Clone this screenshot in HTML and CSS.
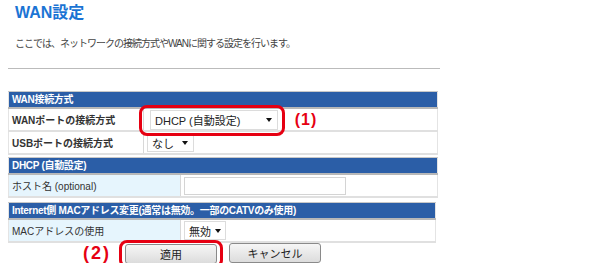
FILE: index.html
```html
<!DOCTYPE html>
<html lang="ja">
<head>
    <meta charset="UTF-8">
    <title>WAN設定</title>
    <link rel="stylesheet" href="styles.css">
</head>
<body>
    <div class="page">
        <h1 class="title">WAN設定</h1>
        <p class="lead">ここでは、ネットワークの接続方式やWANに関する設定を行います。</p>
        <hr class="rule">

        <table class="setting first">
            <tr><th colspan="2">WAN接続方式</th></tr>
            <tr>
                <td class="label bold">WANポートの接続方式</td>
                <td class="value">
                    <span class="mark">
                        <span class="select wide">DHCP (自動設定)<span class="arrow"></span></span>
                        <span class="ring"></span>
                    </span>
                    <span class="note">(1)</span>
                </td>
            </tr>
            <tr>
                <td class="label bold">USBポートの接続方式</td>
                <td class="value"><span class="select small">なし<span class="arrow"></span></span></td>
            </tr>
        </table>

        <table class="setting">
            <tr><th colspan="2">DHCP (自動設定)</th></tr>
            <tr>
                <td class="label blue wide-label">ホスト名 (optional)</td>
                <td class="value"><span class="textbox"></span></td>
            </tr>
        </table>

        <table class="setting gap narrow">
            <tr><th colspan="2">Internet側 MACアドレス変更(通常は無効。一部のCATVのみ使用)</th></tr>
            <tr>
                <td class="label blue wide-label">MACアドレスの使用</td>
                <td class="value"><span class="select tiny">無効<span class="arrow"></span></span></td>
            </tr>
        </table>

        <div class="buttons">
            <span class="note big">(2)</span>
            <span class="press">
                <button class="btn">適用</button>
            </span>
            <button class="btn cancel">キャンセル</button>
        </div>
    </div>
</body>
</html>
```

FILE: styles.css
```css
/* ページ全体 */
body {
    margin: 0;
    background-color: #fff;
    font-family: "Liberation Sans", "Noto Sans CJK JP", sans-serif;
    color: #333;
}
.page {
    width: 440px;
    padding: 0 0 0 8px;
}
.title {
    margin: 2px 0 0 7px;
    font-size: 16px;
    font-weight: bold;
    color: #1b74d4;
    line-height: 22px;
}
.lead {
    margin: 13px 0 0 7px;
    font-size: 10px;
    line-height: 14px;
    letter-spacing: -1px;
    color: #444;
}
.rule {
    margin: 17px 0 0 0;
    border: none;
    border-top: 1px solid #bbb;
    width: 432px;
}

/* 設定テーブル */
.setting {
    width: 430px;
    border-collapse: collapse;
    border: 1px solid #e4e4e4;
    font-size: 10px;
    margin-top: 2px;
}
.setting.first {
    margin-top: 22px;
}
.setting.gap {
    margin-top: 4px;
}
.setting.narrow {
    width: 428px;
}
.setting th {
    background-color: #2b5ea7;
    color: #fff;
    text-align: left;
    font-weight: bold;
    height: 15px;
    padding: 0 3px;
    border-top: 1px solid #c8c8c8;
    border-bottom: 2px solid #b8b8b8;
    line-height: 15px;
    letter-spacing: -0.3px;
}
.setting td {
    border-bottom: 2px solid #e0e0e0;
    height: 21px;
    padding: 0 3px;
    vertical-align: middle;
}
.label {
    width: 128px;
    border-right: 1px solid #d8d8d8;
    color: #333;
}
.label.bold {
    font-weight: bold;
}
.label.blue {
    background-color: #e6f5fd;
}
.label.wide-label {
    width: 165px;
}
.value {
    padding-left: 3px;
}

/* セレクト風 */
.select {
    display: inline-flex;
    align-items: center;
    justify-content: space-between;
    box-sizing: border-box;
    height: 19px;
    padding: 0 5px 0 4px;
    border: 1px solid #dcdcdc;
    background-color: #fff;
    font-size: 11px;
    color: #222;
    white-space: nowrap;
    vertical-align: middle;
}
.select.wide {
    width: 128px;
    height: 20px;
    font-size: 11px;
    margin-left: 3px;
}
.select.small {
    width: 47px;
}
.select.tiny {
    width: 42px;
    gap: 4px;
}
.arrow {
    width: 0;
    height: 0;
    border-left: 3px solid transparent;
    border-right: 3px solid transparent;
    border-top: 4px solid #111;
}
.textbox {
    display: inline-block;
    width: 160px;
    height: 16px;
    border: 1px solid #d4d4d4;
    background-color: #fff;
    vertical-align: middle;
}

/* 赤い囲み */
.mark {
    position: relative;
    display: inline-flex;
    vertical-align: middle;
}
.ring {
    position: absolute;
    top: -5px;
    bottom: -6px;
    left: -8px;
    right: -7px;
    border: 3px solid #e60012;
    border-radius: 8px;
}
.press {
    display: flex;
    padding: 1px 3px;
    margin: -4px 0 -5px 8px;
    border: 3px solid #e60012;
    border-radius: 8px;
}
.note {
    color: #e60012;
    font-weight: bold;
    font-size: 16px;
    letter-spacing: 1px;
    margin-left: 14px;
    vertical-align: middle;
}
.note.big {
    font-size: 18px;
    line-height: 20px;
    letter-spacing: 2px;
    margin: 0;
}

/* ボタン */
.buttons {
    display: flex;
    align-items: center;
    padding-left: 75px;
    margin-top: 0;
}
.btn {
    width: 92px;
    height: 20px;
    padding: 0;
    border: 1px solid #8a8a8a;
    border-radius: 3px;
    background: linear-gradient(#f6f6f6, #dcdcdc);
    font-family: "Liberation Sans", "Noto Sans CJK JP", sans-serif;
    font-size: 11px;
    color: #222;
}
.btn.cancel {
    margin-left: 6px;
}
```
